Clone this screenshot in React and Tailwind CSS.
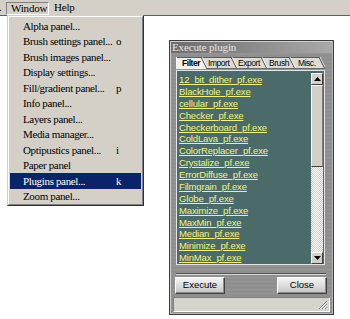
import React from 'react'

const MENU_ITEMS = [
  ['Alpha panel...', ''],
  ['Brush settings panel...', 'o'],
  ['Brush images panel...', ''],
  ['Display settings...', ''],
  ['Fill/gradient panel...', 'p'],
  ['Info panel...', ''],
  ['Layers panel...', ''],
  ['Media manager...', ''],
  ['Optipustics panel...', 'i'],
  ['Paper panel', ''],
  ['Plugins panel...', 'k'],
  ['Zoom panel...', ''],
]

const PLUGINS = [
  '12_bit_dither_pf.exe',
  'BlackHole_pf.exe',
  'cellular_pf.exe',
  'Checker_pf.exe',
  'Checkerboard_pf.exe',
  'ColdLava_pf.exe',
  'ColorReplacer_pf.exe',
  'Crystalize_pf.exe',
  'ErrorDiffuse_pf.exe',
  'Filmgrain_pf.exe',
  'Globe_pf.exe',
  'Maximize_pf.exe',
  'MaxMin_pf.exe',
  'Median_pf.exe',
  'Minimize_pf.exe',
  'MinMax_pf.exe',
]

// tab label x offsets inside the 149px tab strip
const TABS = [
  { label: 'Filter', x: 6 },
  { label: 'Import', x: 32 },
  { label: 'Export', x: 62 },
  { label: 'Brush', x: 93 },
  { label: 'Misc.', x: 122 },
]
const TAB_EDGES = [31, 61, 91, 119, 149]

const serif = "font-['Liberation_Serif','Times_New_Roman',serif]"
const sans = "font-['Liberation_Sans',Arial,sans-serif]"

const brushed =
  'bg-[repeating-linear-gradient(180deg,#8e8e8e_0px,#9b9b9b_1px,#878787_2px,#959595_3px,#8a8a8a_4px)]'

const Arrow = ({ down }) => (
  <svg width="7" height="4" viewBox="0 0 7 4">
    <polygon points={down ? '0,0 7,0 3.5,4' : '3.5,0 7,4 0,4'} fill="#000" />
  </svg>
)

const WinButton = ({ children }) => (
  <div className={`w-[50px] h-[17px] flex items-center justify-center text-[9.5px] text-black ${sans} bg-[linear-gradient(180deg,#f4f4f4,#c6c6c6)] border border-t-white border-l-white border-r-[#404040] border-b-[#404040] shadow-[inset_-1px_-1px_0_#8a8a8a]`}>
    {children}
  </div>
)

export default function App() {
  return (
    <div className="relative w-[350px] h-[319px] overflow-hidden bg-white">
      {/* Menu bar */}
      <div className={`h-[15px] bg-[#d4d0c8] flex items-center text-[11px] text-black tracking-[-0.2px] ${serif}`}>
        <span className="w-[7px] -ml-[1px]">.</span>
        <div className="h-[13px] mt-[2px] w-[43px] flex items-center pl-[4px] border border-t-[#808080] border-l-[#808080] border-r-white border-b-white">
          Window
        </div>
        <span className="ml-[5px]">Help</span>
      </div>
      <div className="h-[1px] bg-[#3f5f9f]" />

      {/* Dropdown menu */}
      <div className="absolute left-[7px] top-[15px] w-[137px] h-[191px] bg-[#d4d0c8] border border-t-[#d4d0c8] border-l-[#d4d0c8] border-r-[#303030] border-b-[#303030]">
        <div className={`h-full pt-[1px] border border-t-white border-l-white border-r-[#808080] border-b-[#808080] text-[11px] tracking-[-0.35px] ${serif}`}>
          {MENU_ITEMS.map(([label, key]) => {
            const active = label === 'Plugins panel...'
            return (
              <div
                key={label}
                className={`h-[15.5px] mx-[1px] flex items-center pl-[13px] ${active ? 'bg-[#0a246a] text-white' : 'text-black'}`}
              >
                <span className="w-[93px]">{label}</span>
                <span>{key}</span>
              </div>
            )
          })}
        </div>
      </div>

      {/* Execute plugin window */}
      <div className={`absolute left-[169px] top-[40px] w-[165px] h-[275px] flex flex-col border border-[#3c3c3c] ${brushed}`}>
        <div className="flex-1 flex flex-col border border-t-[#cfcfcf] border-l-[#cfcfcf] border-r-[#b4b4b4] border-b-[#b4b4b4]">
          {/* title */}
          <div className={`h-[11px] flex items-center pl-[1px] bg-[linear-gradient(90deg,#6d6d6d,#8a8a8a_50%,#a9a9a9)] text-[#e6e6e6] text-[11px] tracking-[-0.15px] ${serif}`}>
            Execute plugin
          </div>

          <div className="flex-1 flex flex-col pl-[5px] pr-[6px]">
            {/* tabs */}
            <div className={`relative mt-[4px] h-[12px] w-[149px] text-[8.5px] tracking-[-0.45px] text-black ${sans}`}>
              <svg className="absolute inset-0" width="149" height="12" viewBox="0 0 149 12">
                <polygon points="0,0 143,0 149,12 0,12" fill="#dddcd4" />
                <polygon points="0,0 25,0 31,12 0,12" fill="#f2f1ea" />
                <line x1="0" y1="0.5" x2="143" y2="0.5" stroke="#5a5a5a" />
                <line x1="0.5" y1="0" x2="0.5" y2="12" stroke="#ffffff" />
                {TAB_EDGES.map(e => (
                  <g key={e}>
                    <line x1={e - 6} y1="0" x2={e} y2="12" stroke="#3a3a3a" />
                    <line x1={e - 5} y1="0" x2={e + 1} y2="12" stroke="#ffffff" strokeOpacity="0.7" />
                  </g>
                ))}
                <line x1="31" y1="11.5" x2="149" y2="11.5" stroke="#6a6a6a" />
              </svg>
              {TABS.map(t => (
                <span
                  key={t.label}
                  className={`absolute top-[1px] leading-[11px] ${t.label === 'Filter' ? 'font-bold' : ''}`}
                  style={{ left: t.x }}
                >
                  {t.label}
                </span>
              ))}
            </div>

            {/* list */}
            <div className="mt-[1px] h-[195px] w-[149px] flex bg-[#4b6b6b] border border-[#e4e4e4]">
              <div className={`flex-1 pl-[2px] pt-[3px] text-[9.5px] leading-[11.87px] tracking-[-0.15px] text-[#f3f37c] ${sans}`}>
                {PLUGINS.map(p => (
                  <div key={p} className="underline underline-offset-[1px]">{p}</div>
                ))}
              </div>
              <div className="w-[12px] mt-[2px] mr-[1px] flex flex-col">
                <div className="h-[12px] flex items-center justify-center bg-[#d4d0c8] border border-t-white border-l-white border-r-[#404040] border-b-[#404040]">
                  <Arrow />
                </div>
                <div className="h-[82px] bg-[#d4d0c8] border border-t-white border-l-white border-r-[#808080] border-b-[#404040]" />
                <div className="flex-1 bg-[repeating-conic-gradient(#d4d0c8_0%_25%,#ffffff_0%_50%)] bg-[length:2px_2px]" />
                <div className="h-[12px] flex items-center justify-center bg-[#d4d0c8] border border-t-white border-l-white border-r-[#404040] border-b-[#404040]">
                  <Arrow down />
                </div>
              </div>
            </div>

            {/* separator */}
            <div className="mt-[8px] h-[1px] bg-[#505050]" />
            <div className="h-[1px] bg-[#d8d8d8]" />

            {/* buttons */}
            <div className="mt-[2px] flex justify-between -ml-[1px] mr-[-1px]">
              <WinButton>Execute</WinButton>
              <WinButton>Close</WinButton>
            </div>
          </div>

          {/* status bar */}
          <div className="mt-[3px] mx-[2px] mb-[1px] h-[15px] relative bg-[#d6d3cb] border border-t-[#808080] border-l-[#808080] border-r-white border-b-white">
            <svg className="absolute right-[1px] bottom-[1px]" width="11" height="11" viewBox="0 0 11 11">
              <path d="M10 2 L2 10 M10 5 L5 10 M10 8 L8 10" stroke="#808080" strokeWidth="1" />
              <path d="M10 3 L3 10 M10 6 L6 10 M10 9 L9 10" stroke="#ffffff" strokeWidth="1" />
            </svg>
          </div>
        </div>
      </div>
    </div>
  )
}
